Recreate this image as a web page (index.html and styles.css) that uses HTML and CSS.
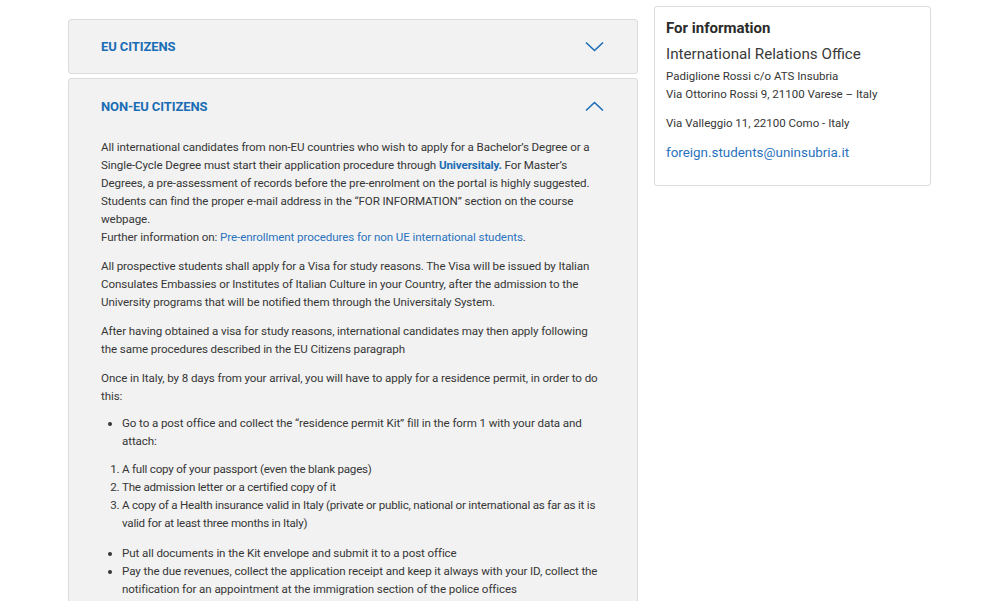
FILE: index.html
```html
<!DOCTYPE html>
<html lang="en">
<head>
<meta charset="utf-8">
<title>Admission</title>
<link rel="stylesheet" href="styles.css">
</head>
<body>
<div class="page">
  <main class="main">
    <section class="acc">
      <div class="acc-head">
        <h3 class="acc-title">EU CITIZENS</h3>
        <svg class="chev" width="19" height="11" viewBox="0 0 19 11"><path d="M1 1.5 L9.5 9.5 L18 1.5" fill="none" stroke="#1a6db5" stroke-width="1.6"/></svg>
      </div>
    </section>
    <section class="acc open">
      <div class="acc-head">
        <h3 class="acc-title">NON-EU CITIZENS</h3>
        <svg class="chev" width="19" height="11" viewBox="0 0 19 11"><path d="M1 9.5 L9.5 1.5 L18 9.5" fill="none" stroke="#1a6db5" stroke-width="1.6"/></svg>
      </div>
      <div class="acc-body">
        <p>All international candidates from non-EU countries who wish to apply for a Bachelor’s Degree or a Single-Cycle Degree must start their application procedure through <a class="strong" href="#">Universitaly.</a> For Master’s Degrees, a pre-assessment of records before the pre-enrolment on the portal is highly suggested. Students can find the proper e-mail address in the “FOR INFORMATION” section on the course webpage.<br>Further information on: <a href="#">Pre-enrollment procedures for non UE international students</a>.</p>
        <p>All prospective students shall apply for a Visa for study reasons. The Visa will be issued by Italian Consulates Embassies or Institutes of Italian Culture in your Country, after the admission to the University programs that will be notified them through the Universitaly System.</p>
        <p>After having obtained a visa for study reasons, international candidates may then apply following the same procedures described in the EU Citizens paragraph</p>
        <p class="lead">Once in Italy, by 8 days from your arrival, you will have to apply for a residence permit, in order to do this:</p>
        <ul class="steps first">
          <li>Go to a post office and collect the “residence permit Kit” fill in the form 1 with your data and attach:</li>
        </ul>
        <ol class="docs">
          <li>A full copy of your passport (even the blank pages)</li>
          <li>The admission letter or a certified copy of it</li>
          <li>A copy of a Health insurance valid in Italy (private or public, national or international as far as it is valid for at least three months in Italy)</li>
        </ol>
        <ul class="steps">
          <li>Put all documents in the Kit envelope and submit it to a post office</li>
          <li>Pay the due revenues, collect the application receipt and keep it always with your ID, collect the notification for an appointment at the immigration section of the police offices</li>
        </ul>
      </div>
    </section>
  </main>
  <aside class="side">
    <div class="info">
      <h4 class="info-title">For information</h4>
      <div class="info-office">International Relations Office</div>
      <p class="info-addr">Padiglione Rossi c/o ATS Insubria<br>Via Ottorino Rossi 9, 21100 Varese – Italy</p>
      <p class="info-addr">Via Valleggio 11, 22100 Como - Italy</p>
      <a class="info-mail" href="#">foreign.students@uninsubria.it</a>
    </div>
  </aside>
</div>
</body>
</html>
```
FILE: styles.css
```css
* { box-sizing: border-box; }
html, body { margin: 0; padding: 0; background: #fff; }
body {
  font-family: "Roboto", "Liberation Sans", sans-serif;
  color: #363636;
  height: 601px;
  overflow: hidden;
}
.page {
  display: flex;
  align-items: flex-start;
  padding-left: 68px;
  gap: 16px;
}
.main {
  width: 570px;
  padding-top: 19px;
  display: flex;
  flex-direction: column;
  gap: 4px;
}
.acc {
  background: #f2f2f2;
  border: 1px solid #dcdcdc;
  border-radius: 3px;
}
.acc-head {
  height: 53px;
  display: flex;
  align-items: center;
  justify-content: space-between;
  padding: 0 33px 0 32px;
}
.open .acc-head { height: 54px; }
.acc-title {
  margin: 0;
  font-size: 13px;
  font-weight: 700;
  color: #1a6db5;
  letter-spacing: -0.1px;
}
.chev { display: block; }
.acc-body {
  padding: 5px 32px 20px 32px;
  font-size: 11.6px;
  line-height: 18px;
  letter-spacing: -0.1px;
}
.acc-body p { margin: 0 0 11px; }
.acc-body p.lead { margin-bottom: 9px; }
.acc-body a { color: #2a73c0; text-decoration: none; }
.acc-body a.strong { font-weight: 700; color: #1a6db5; }
.acc-body ul { margin: 12px 0 0; padding-left: 21px; }
.acc-body ul.first { margin: 9px 0 10px; }
.acc-body ol { margin: 0; padding-left: 21px; letter-spacing: -0.22px; margin-right: -2px; }
.side { padding-top: 6px; }
.info {
  width: 277px;
  height: 180px;
  border: 1px solid #dcdcdc;
  border-radius: 3px;
  background: #fff;
  padding: 11px 11px;
}
.info-title {
  margin: 0;
  font-size: 15px;
  font-weight: 700;
  color: #2b2b2b;
  line-height: 20px;
}
.info-office {
  margin-top: 6px;
  font-size: 15.2px;
  line-height: 20px;
  color: #3a3a3a;
}
.info-addr {
  margin: 3px 0 11px;
  font-size: 11.5px;
  line-height: 18px;
  color: #363636;
}
.info-addr + .info-addr { margin-top: 0; }
.info-mail {
  display: block;
  margin-top: 1px;
  font-size: 13.4px;
  color: #2a73c0;
  text-decoration: none;
  line-height: 20px;
}
```
